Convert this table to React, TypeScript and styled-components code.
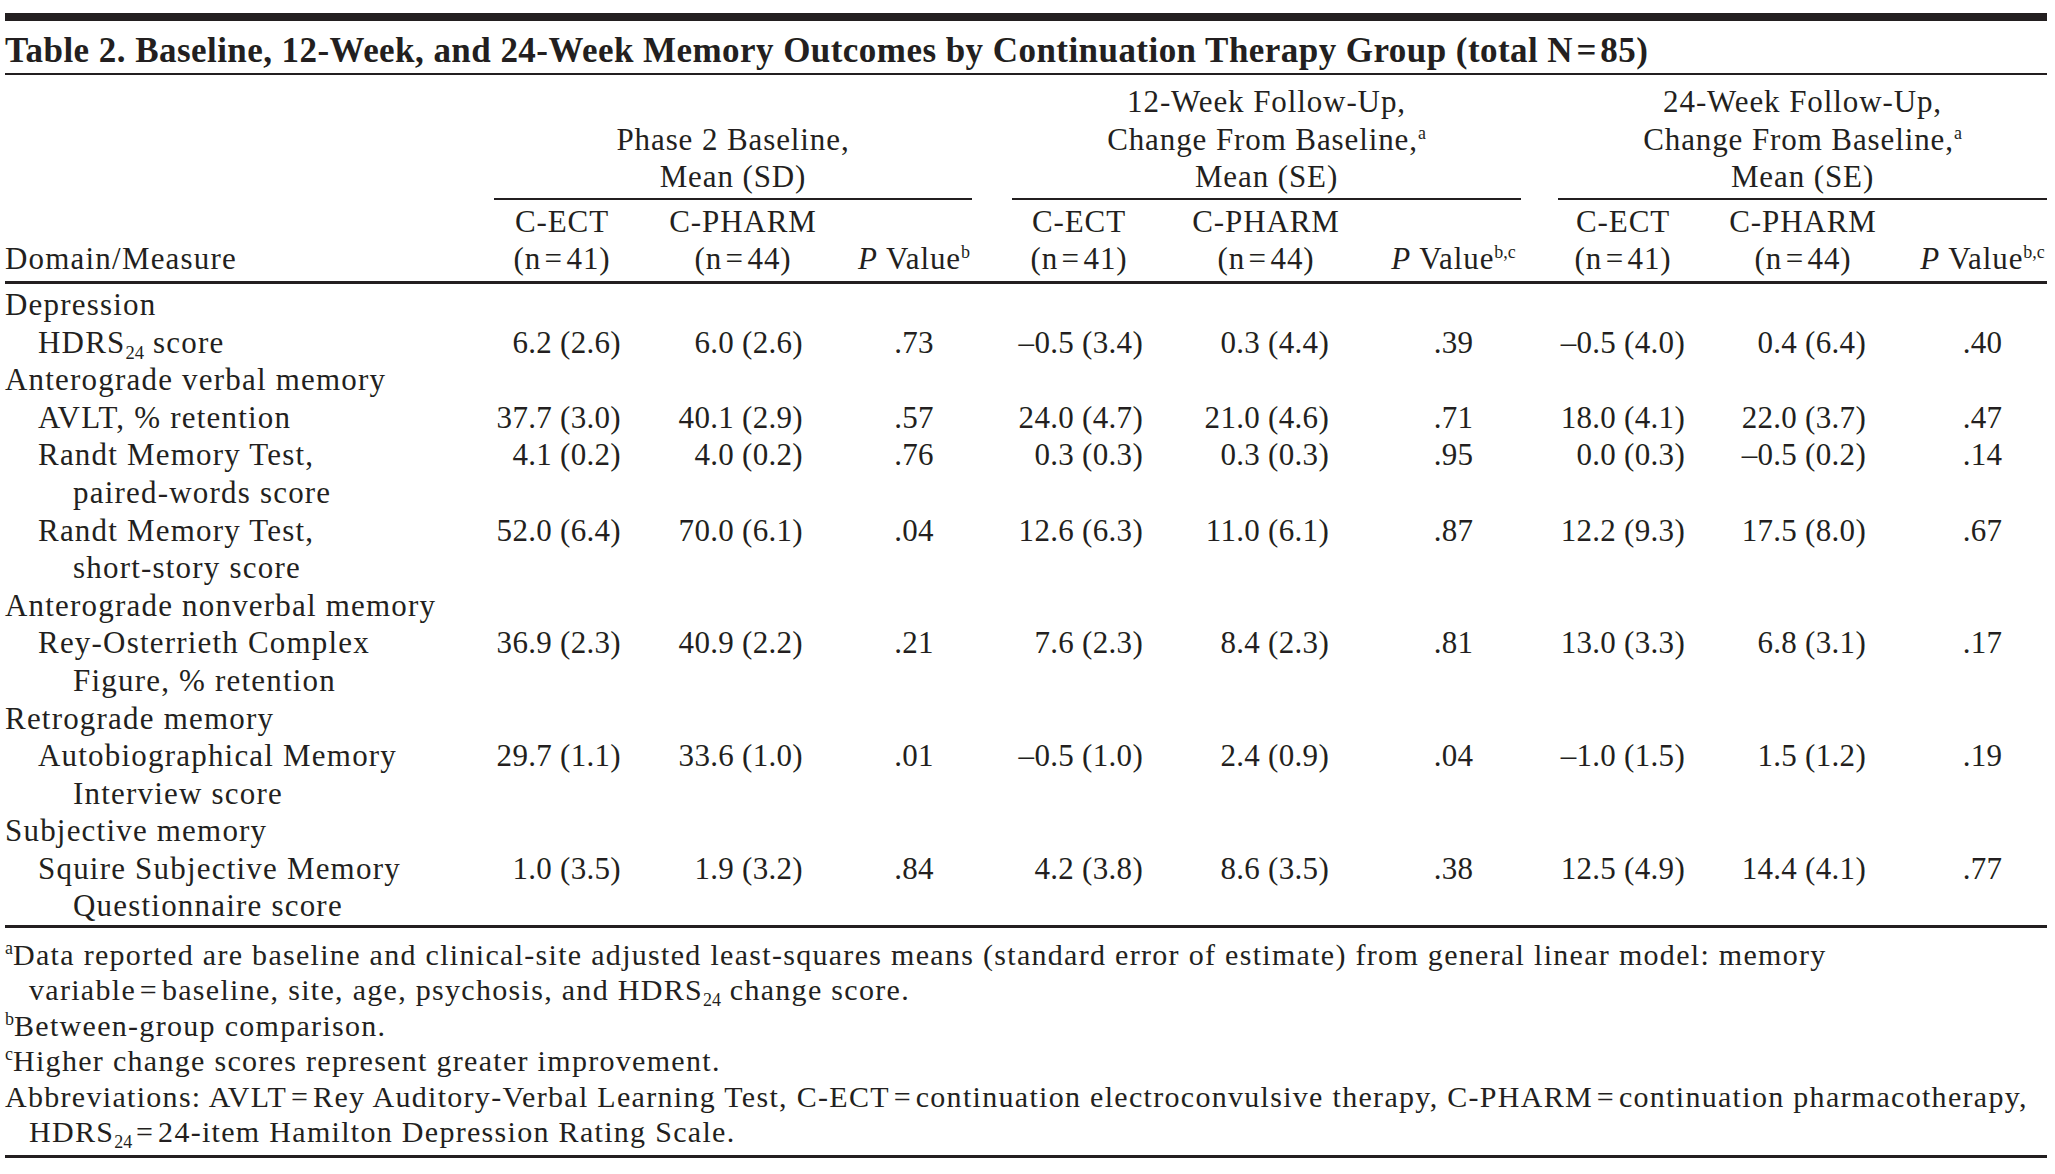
import React from "react";
import styled, { createGlobalStyle } from "styled-components";

const ink = "#231f20";

const Global = createGlobalStyle`
  html, body { margin: 0; padding: 0; background: #ffffff; }
  body {
    font-family: "Liberation Serif", "Times New Roman", serif;
    color: ${ink};
  }
`;

const Page = styled.div`
  width: 2042px;
  padding: 13px 8px 0 5px;
`;

const TopRule = styled.div`
  height: 8px;
  background: ${ink};
`;

const Title = styled.h1`
  margin: 0;
  padding-top: 8px;
  font-size: 35px;
  font-weight: 700;
  line-height: 44px;
  letter-spacing: 0.45px;
  white-space: nowrap;
  border-bottom: 2px solid ${ink};
`;

const Table = styled.table`
  width: 2042px;
  table-layout: fixed;
  border-collapse: separate;
  border-spacing: 0;
  font-size: 31px;
  line-height: 37.6px;
  letter-spacing: 1.2px;
  color: ${ink};

  tbody tr:first-child td {
    padding-top: 2px;
  }
  tbody tr:last-child td {
    border-bottom: 3px solid ${ink};
  }
`;

const GroupHead = styled.th`
  padding: 8px 0 2px;
  border-bottom: 2px solid ${ink};
  text-align: center;
  vertical-align: bottom;
  font-weight: 400;
  white-space: nowrap;
  letter-spacing: 0.9px;
`;

const GapHead = styled.th`
  padding: 0;
`;

const LabelHead = styled.th`
  padding: 0 0 3px;
  border-bottom: 3px solid ${ink};
  text-align: left;
  vertical-align: bottom;
  font-weight: 400;
  white-space: nowrap;
`;

const SubHead = styled.th`
  padding: 3px 0;
  border-bottom: 3px solid ${ink};
  text-align: center;
  vertical-align: bottom;
  font-weight: 400;
  white-space: nowrap;
  letter-spacing: 0.9px;
`;

const HeadLine = styled.span`
  display: block;
`;

const LabelCell = styled.td`
  padding: 0;
  text-align: left;
  vertical-align: top;
  white-space: nowrap;
`;

const LabelLine = styled.span<{ $level: number }>`
  display: block;
  padding-left: ${(p) => (p.$level === 0 ? 0 : p.$level === 1 ? 33 : 68)}px;
`;

const ValueCell = styled.td<{ $pad: number }>`
  padding: 0 ${(p) => p.$pad}px 0 0;
  text-align: right;
  vertical-align: top;
  letter-spacing: 0.3px;
  white-space: nowrap;
`;

const PCell = styled.td`
  padding: 0;
  text-align: center;
  vertical-align: top;
  letter-spacing: 0.3px;
  white-space: nowrap;
`;

const GapCell = styled.td`
  padding: 0;
`;

const Sup = styled.sup`
  font-size: 0.58em;
  line-height: 0;
  vertical-align: 0.62em;
  letter-spacing: 0;
`;

const Sub = styled.sub`
  font-size: 0.6em;
  line-height: 0;
  vertical-align: -0.32em;
  letter-spacing: 0;
`;

const Ital = styled.i`
  font-style: italic;
`;

const Notes = styled.div`
  padding: 9px 0 5px;
  border-bottom: 3px solid ${ink};
  font-size: 30px;
  line-height: 35.4px;
  letter-spacing: 1.3px;
`;

const Note = styled.p`
  margin: 0;
  padding-left: 24px;
  text-indent: -24px;
  white-space: nowrap;
`;

const NoteSup = styled.sup`
  font-size: 0.6em;
  line-height: 0;
  vertical-align: 0.62em;
  letter-spacing: 0;
`;

const T = "\u200A";
const M = "\u2013";

const cols = [489, 136, 226, 116, 40, 134, 240, 135, 37, 130, 230, 129];
const pads = [9, 53, 3, 57, 3, 52];

type Row =
  | { kind: "cat"; label: string }
  | { kind: "measure"; lines: React.ReactNode[]; values: string[] };

const HDRS = (
  <>
    HDRS<Sub>24</Sub>
  </>
);

const rows: Row[] = [
  { kind: "cat", label: "Depression" },
  {
    kind: "measure",
    lines: [<>{HDRS} score</>],
    values: ["6.2 (2.6)", "6.0 (2.6)", ".73", `${M}0.5 (3.4)`, "0.3 (4.4)", ".39", `${M}0.5 (4.0)`, "0.4 (6.4)", ".40"],
  },
  { kind: "cat", label: "Anterograde verbal memory" },
  {
    kind: "measure",
    lines: ["AVLT, % retention"],
    values: ["37.7 (3.0)", "40.1 (2.9)", ".57", "24.0 (4.7)", "21.0 (4.6)", ".71", "18.0 (4.1)", "22.0 (3.7)", ".47"],
  },
  {
    kind: "measure",
    lines: ["Randt Memory Test,", "paired-words score"],
    values: ["4.1 (0.2)", "4.0 (0.2)", ".76", "0.3 (0.3)", "0.3 (0.3)", ".95", "0.0 (0.3)", `${M}0.5 (0.2)`, ".14"],
  },
  {
    kind: "measure",
    lines: ["Randt Memory Test,", "short-story score"],
    values: ["52.0 (6.4)", "70.0 (6.1)", ".04", "12.6 (6.3)", "11.0 (6.1)", ".87", "12.2 (9.3)", "17.5 (8.0)", ".67"],
  },
  { kind: "cat", label: "Anterograde nonverbal memory" },
  {
    kind: "measure",
    lines: ["Rey-Osterrieth Complex", "Figure, % retention"],
    values: ["36.9 (2.3)", "40.9 (2.2)", ".21", "7.6 (2.3)", "8.4 (2.3)", ".81", "13.0 (3.3)", "6.8 (3.1)", ".17"],
  },
  { kind: "cat", label: "Retrograde memory" },
  {
    kind: "measure",
    lines: ["Autobiographical Memory", "Interview score"],
    values: ["29.7 (1.1)", "33.6 (1.0)", ".01", `${M}0.5 (1.0)`, "2.4 (0.9)", ".04", `${M}1.0 (1.5)`, "1.5 (1.2)", ".19"],
  },
  { kind: "cat", label: "Subjective memory" },
  {
    kind: "measure",
    lines: ["Squire Subjective Memory", "Questionnaire score"],
    values: ["1.0 (3.5)", "1.9 (3.2)", ".84", "4.2 (3.8)", "8.6 (3.5)", ".38", "12.5 (4.9)", "14.4 (4.1)", ".77"],
  },
];

const groups: React.ReactNode[][] = [
  ["Phase 2 Baseline,", "Mean (SD)"],
  [
    "12-Week Follow-Up,",
    <>
      Change From Baseline,<Sup>a</Sup>
    </>,
    "Mean (SE)",
  ],
  [
    "24-Week Follow-Up,",
    <>
      Change From Baseline,<Sup>a</Sup>
    </>,
    "Mean (SE)",
  ],
];

const pSups = ["b", "b,c", "b,c"];

function GroupValues({ values, g }: { values: string[]; g: number }) {
  return (
    <>
      <ValueCell $pad={pads[g * 2]}>{values[g * 3]}</ValueCell>
      <ValueCell $pad={pads[g * 2 + 1]}>{values[g * 3 + 1]}</ValueCell>
      <PCell>{values[g * 3 + 2]}</PCell>
    </>
  );
}

export default function App() {
  return (
    <>
      <Global />
      <Page>
        <TopRule />
        <Title>
          Table 2. Baseline, 12-Week, and 24-Week Memory Outcomes by Continuation Therapy Group (total N{T}={T}85)
        </Title>
        <Table>
          <colgroup>
            {cols.map((w, i) => (
              <col key={i} style={{ width: w }} />
            ))}
          </colgroup>
          <thead>
            <tr>
              <LabelHead rowSpan={2}>Domain/Measure</LabelHead>
              {groups.map((g, gi) => (
                <React.Fragment key={gi}>
                  {gi > 0 && <GapHead />}
                  <GroupHead colSpan={3}>
                    {g.map((line, li) => (
                      <HeadLine key={li}>{line}</HeadLine>
                    ))}
                  </GroupHead>
                </React.Fragment>
              ))}
            </tr>
            <tr>
              {pSups.map((s, gi) => (
                <React.Fragment key={gi}>
                  {gi > 0 && <SubHead />}
                  <SubHead>
                    <HeadLine>C-ECT</HeadLine>
                    <HeadLine>(n{T}={T}41)</HeadLine>
                  </SubHead>
                  <SubHead>
                    <HeadLine>C-PHARM</HeadLine>
                    <HeadLine>(n{T}={T}44)</HeadLine>
                  </SubHead>
                  <SubHead>
                    <HeadLine>
                      <Ital>P</Ital> Value<Sup>{s}</Sup>
                    </HeadLine>
                  </SubHead>
                </React.Fragment>
              ))}
            </tr>
          </thead>
          <tbody>
            {rows.map((r, i) =>
              r.kind === "cat" ? (
                <tr key={i}>
                  <LabelCell colSpan={12}>
                    <LabelLine $level={0}>{r.label}</LabelLine>
                  </LabelCell>
                </tr>
              ) : (
                <tr key={i}>
                  <LabelCell>
                    {r.lines.map((l, li) => (
                      <LabelLine key={li} $level={li === 0 ? 1 : 2}>
                        {l}
                      </LabelLine>
                    ))}
                  </LabelCell>
                  <GroupValues values={r.values} g={0} />
                  <GapCell />
                  <GroupValues values={r.values} g={1} />
                  <GapCell />
                  <GroupValues values={r.values} g={2} />
                </tr>
              )
            )}
          </tbody>
        </Table>
        <Notes>
          <Note>
            <NoteSup>a</NoteSup>Data reported are baseline and clinical-site adjusted least-squares means (standard error of
            estimate) from general linear model: memory
            <br />
            variable{T}={T}baseline, site, age, psychosis, and {HDRS} change score.
          </Note>
          <Note>
            <NoteSup>b</NoteSup>Between-group comparison.
          </Note>
          <Note>
            <NoteSup>c</NoteSup>Higher change scores represent greater improvement.
          </Note>
          <Note>
            Abbreviations: AVLT{T}={T}Rey Auditory-Verbal Learning Test, C-ECT{T}={T}continuation electroconvulsive therapy,
            C-PHARM{T}={T}continuation pharmacotherapy,
            <br />
            {HDRS}{T}={T}24-item Hamilton Depression Rating Scale.
          </Note>
        </Notes>
      </Page>
    </>
  );
}
